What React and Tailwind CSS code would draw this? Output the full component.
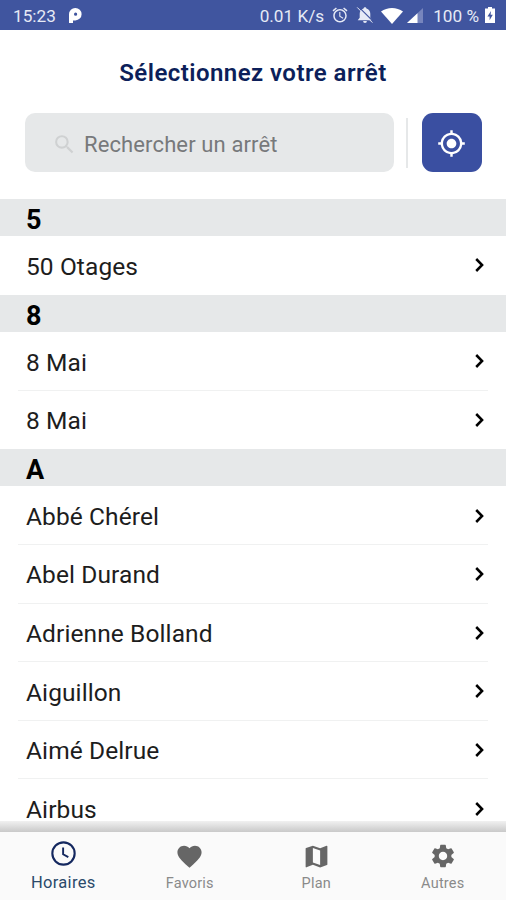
import React, { useState } from "react";
import {
  MdAlarm,
  MdFavorite,
  MdMap,
  MdMyLocation,
  MdSearch,
  MdSettings,
} from "react-icons/md";

const sections = [
  { letter: "5", stops: ["50 Otages"] },
  { letter: "8", stops: ["8 Mai", "8 Mai"] },
  {
    letter: "A",
    stops: [
      "Abbé Chérel",
      "Abel Durand",
      "Adrienne Bolland",
      "Aiguillon",
      "Aimé Delrue",
      "Airbus",
    ],
  },
];

const ClockIcon = () => (
  <svg className="w-[25px] h-[25px] -mt-[5px]" viewBox="0 0 26 26" fill="none" stroke="currentColor">
    <circle cx="13" cy="13" r="11.6" strokeWidth="2.2" />
    <path d="M12.6 6.8v7l5.4 3" strokeWidth="2" />
  </svg>
);

const HeartIcon = () => <MdFavorite className="w-[29px] h-[29px]" />;
const MapIcon = () => <MdMap className="w-[29px] h-[29px]" />;
const GearIcon = () => <MdSettings className="w-[28px] h-[28px]" />;

const tabs = [
  { label: "Horaires", icon: ClockIcon },
  { label: "Favoris", icon: HeartIcon },
  { label: "Plan", icon: MapIcon },
  { label: "Autres", icon: GearIcon },
];

const StatusBar = () => (
  <div className="h-[30px] shrink-0 bg-[#40559f] text-[#e6eaf6] flex items-center pl-[13px] pr-[11px] pt-[3px] text-[17.2px] leading-none">
    <span className="w-[43px] whitespace-nowrap">15:23</span>
    <svg className="w-[13px] h-[15px] ml-[13px] -mt-[2px]" viewBox="0 0 13 15">
      <path
        d="M0 15V6.3A6.3 6.3 0 0 1 6.4 0a6.2 6.2 0 0 1 0 12.4H4V15zM6.6 4.6a1.6 1.6 0 1 0 0 3.2 1.6 1.6 0 0 0 0-3.2z"
        fill="#fff"
        fillRule="evenodd"
      />
    </svg>

    <div className="ml-auto flex items-center">
      <span className="whitespace-nowrap">0.01 K/s</span>
      <MdAlarm className="w-[18px] h-[18px] ml-[7px] -mt-[2px]" />
      <svg className="w-[18px] h-[18px] ml-[7px] -mt-[2px]" viewBox="0 0 18 18">
        <path
          d="M9 1.2c.9 0 1.4.6 1.4 1.4 2.5.7 3.9 2.6 3.9 5.2v4l2 2.4H1.7l2-2.4v-4c0-2.6 1.4-4.5 3.9-5.2 0-.8.5-1.4 1.4-1.4z"
          fill="currentColor"
        />
        <path d="M7.1 15h3.8a1.9 1.9 0 0 1-3.8 0z" fill="currentColor" />
        <path d="M2.4.6 17.2 15.4" stroke="#40559f" strokeWidth="1.2" />
        <path d="M1.2 1.4 16.4 16.6" stroke="currentColor" strokeWidth="1" />
      </svg>
      <svg className="w-[22px] h-[16px] ml-[7px] -mt-[1px]" viewBox="0 0 22 16">
        <path d="M0 3.6C6.2-1.1 15.8-1.1 22 3.6L11 16z" fill="#fff" />
      </svg>
      <svg className="w-[16px] h-[15px] ml-[4px] -mt-[1px]" viewBox="0 0 16 15">
        <path d="M0 15 16 0v15z" fill="#7785bd" />
        <path d="M0 15 10.5 5.2V15z" fill="#fff" />
      </svg>
      <span className="ml-[10px] whitespace-nowrap">100 %</span>
      <svg className="w-[10px] h-[16px] ml-[6px] -mt-[2px]" viewBox="0 0 10 16">
        <path d="M3 0h4v1.6h3V16H0V1.6h3z" fill="#fff" />
        <path d="M6 4 2.4 9.4h2.2V13.2L7.8 7.8H5.6z" fill="#40559f" />
      </svg>
    </div>
  </div>
);

const SearchBar = () => (
  <div className="mt-[25px] pl-[25px] pr-6 flex items-center">
    <label className="w-[369px] h-[59px] rounded-[10px] bg-[#e6e8e9] flex items-center pl-[27px] pt-[4px] text-[#77797b]">
      <MdSearch className="w-[25px] h-[25px] text-[#cfd1d2]" />
      <span className="ml-[7px] text-[22px] leading-none tracking-[0.12px] whitespace-nowrap">
        Rechercher un arrêt
      </span>
    </label>
    <div className="w-[2px] h-[50px] ml-3 bg-[#e6e8e9]" />
    <button className="w-[60px] h-[59px] ml-[14px] rounded-[11px] bg-[#3a4fa1] text-white flex items-center justify-center">
      <MdMyLocation className="w-[29px] h-[29px] mt-[2px] mr-[2px]" />
    </button>
  </div>
);

const App = () => {
  const [active, setActive] = useState("Horaires");

  return (
    <div className="w-full h-screen overflow-hidden bg-white flex flex-col font-[Roboto,sans-serif]">
      <StatusBar />
      <h1 className="mt-[27px] h-[31px] text-center text-[24px] leading-[32px] tracking-[0.45px] font-semibold text-[#0c1f5a] whitespace-nowrap">
        Sélectionnez votre arrêt
      </h1>
      <SearchBar />

      <div className="mt-[27px] flex-1 min-h-0 overflow-hidden">
        {sections.map((section) => (
          <div key={section.letter}>
            <h2 className="h-[37.2px] bg-[#e6e8e9] pl-[26px] pt-[3px] text-[27px] leading-[37px] font-bold text-black">
              {section.letter}
            </h2>
            <ul>
              {section.stops.map((stop, index) => (
                <li key={index} className="group h-[58.6px] px-[18px]">
                  <div className="h-full border-b border-[#f0f1f1] group-last:border-transparent flex items-center justify-between pl-2 pr-[4px] pt-[4px]">
                    <span className="text-[24.5px] leading-none tracking-[0.1px] text-[#1d1d1d]">
                      {stop}
                    </span>
                    <svg
                      className="w-[9px] h-[14px] -mt-[3px] text-black"
                      viewBox="0 0 9 14"
                      fill="none"
                      stroke="currentColor"
                      strokeWidth="2.5"
                    >
                      <path d="M1.2 1 7.1 7l-5.9 6" />
                    </svg>
                  </div>
                </li>
              ))}
            </ul>
          </div>
        ))}
      </div>

      <div className="h-[11px] -mt-[11px] shrink-0 relative bg-linear-to-b from-[#e8e8e8]/60 to-[#c9c9c9]" />
      <nav className="h-[68px] shrink-0 bg-[#fafafa] grid grid-cols-4">
        {tabs.map(({ label, icon: Icon }) => (
          <button
            key={label}
            onClick={() => setActive(label)}
            className={
              active === label
                ? "flex flex-col items-center pt-[9px] text-[#14285f]"
                : "flex flex-col items-center pt-[9px] text-[#666]"
            }
          >
            <span className="h-[30px] flex items-center">
              <Icon />
            </span>
            <span
              className={
                active === label
                  ? "text-[16.5px] leading-[24px] tracking-[0.3px] text-[#2b4a6b]"
                  : "text-[14.5px] leading-[26px] tracking-[0.2px] text-[#8a8a8a]"
              }
            >
              {label}
            </span>
          </button>
        ))}
      </nav>
    </div>
  );
};

export default App;
